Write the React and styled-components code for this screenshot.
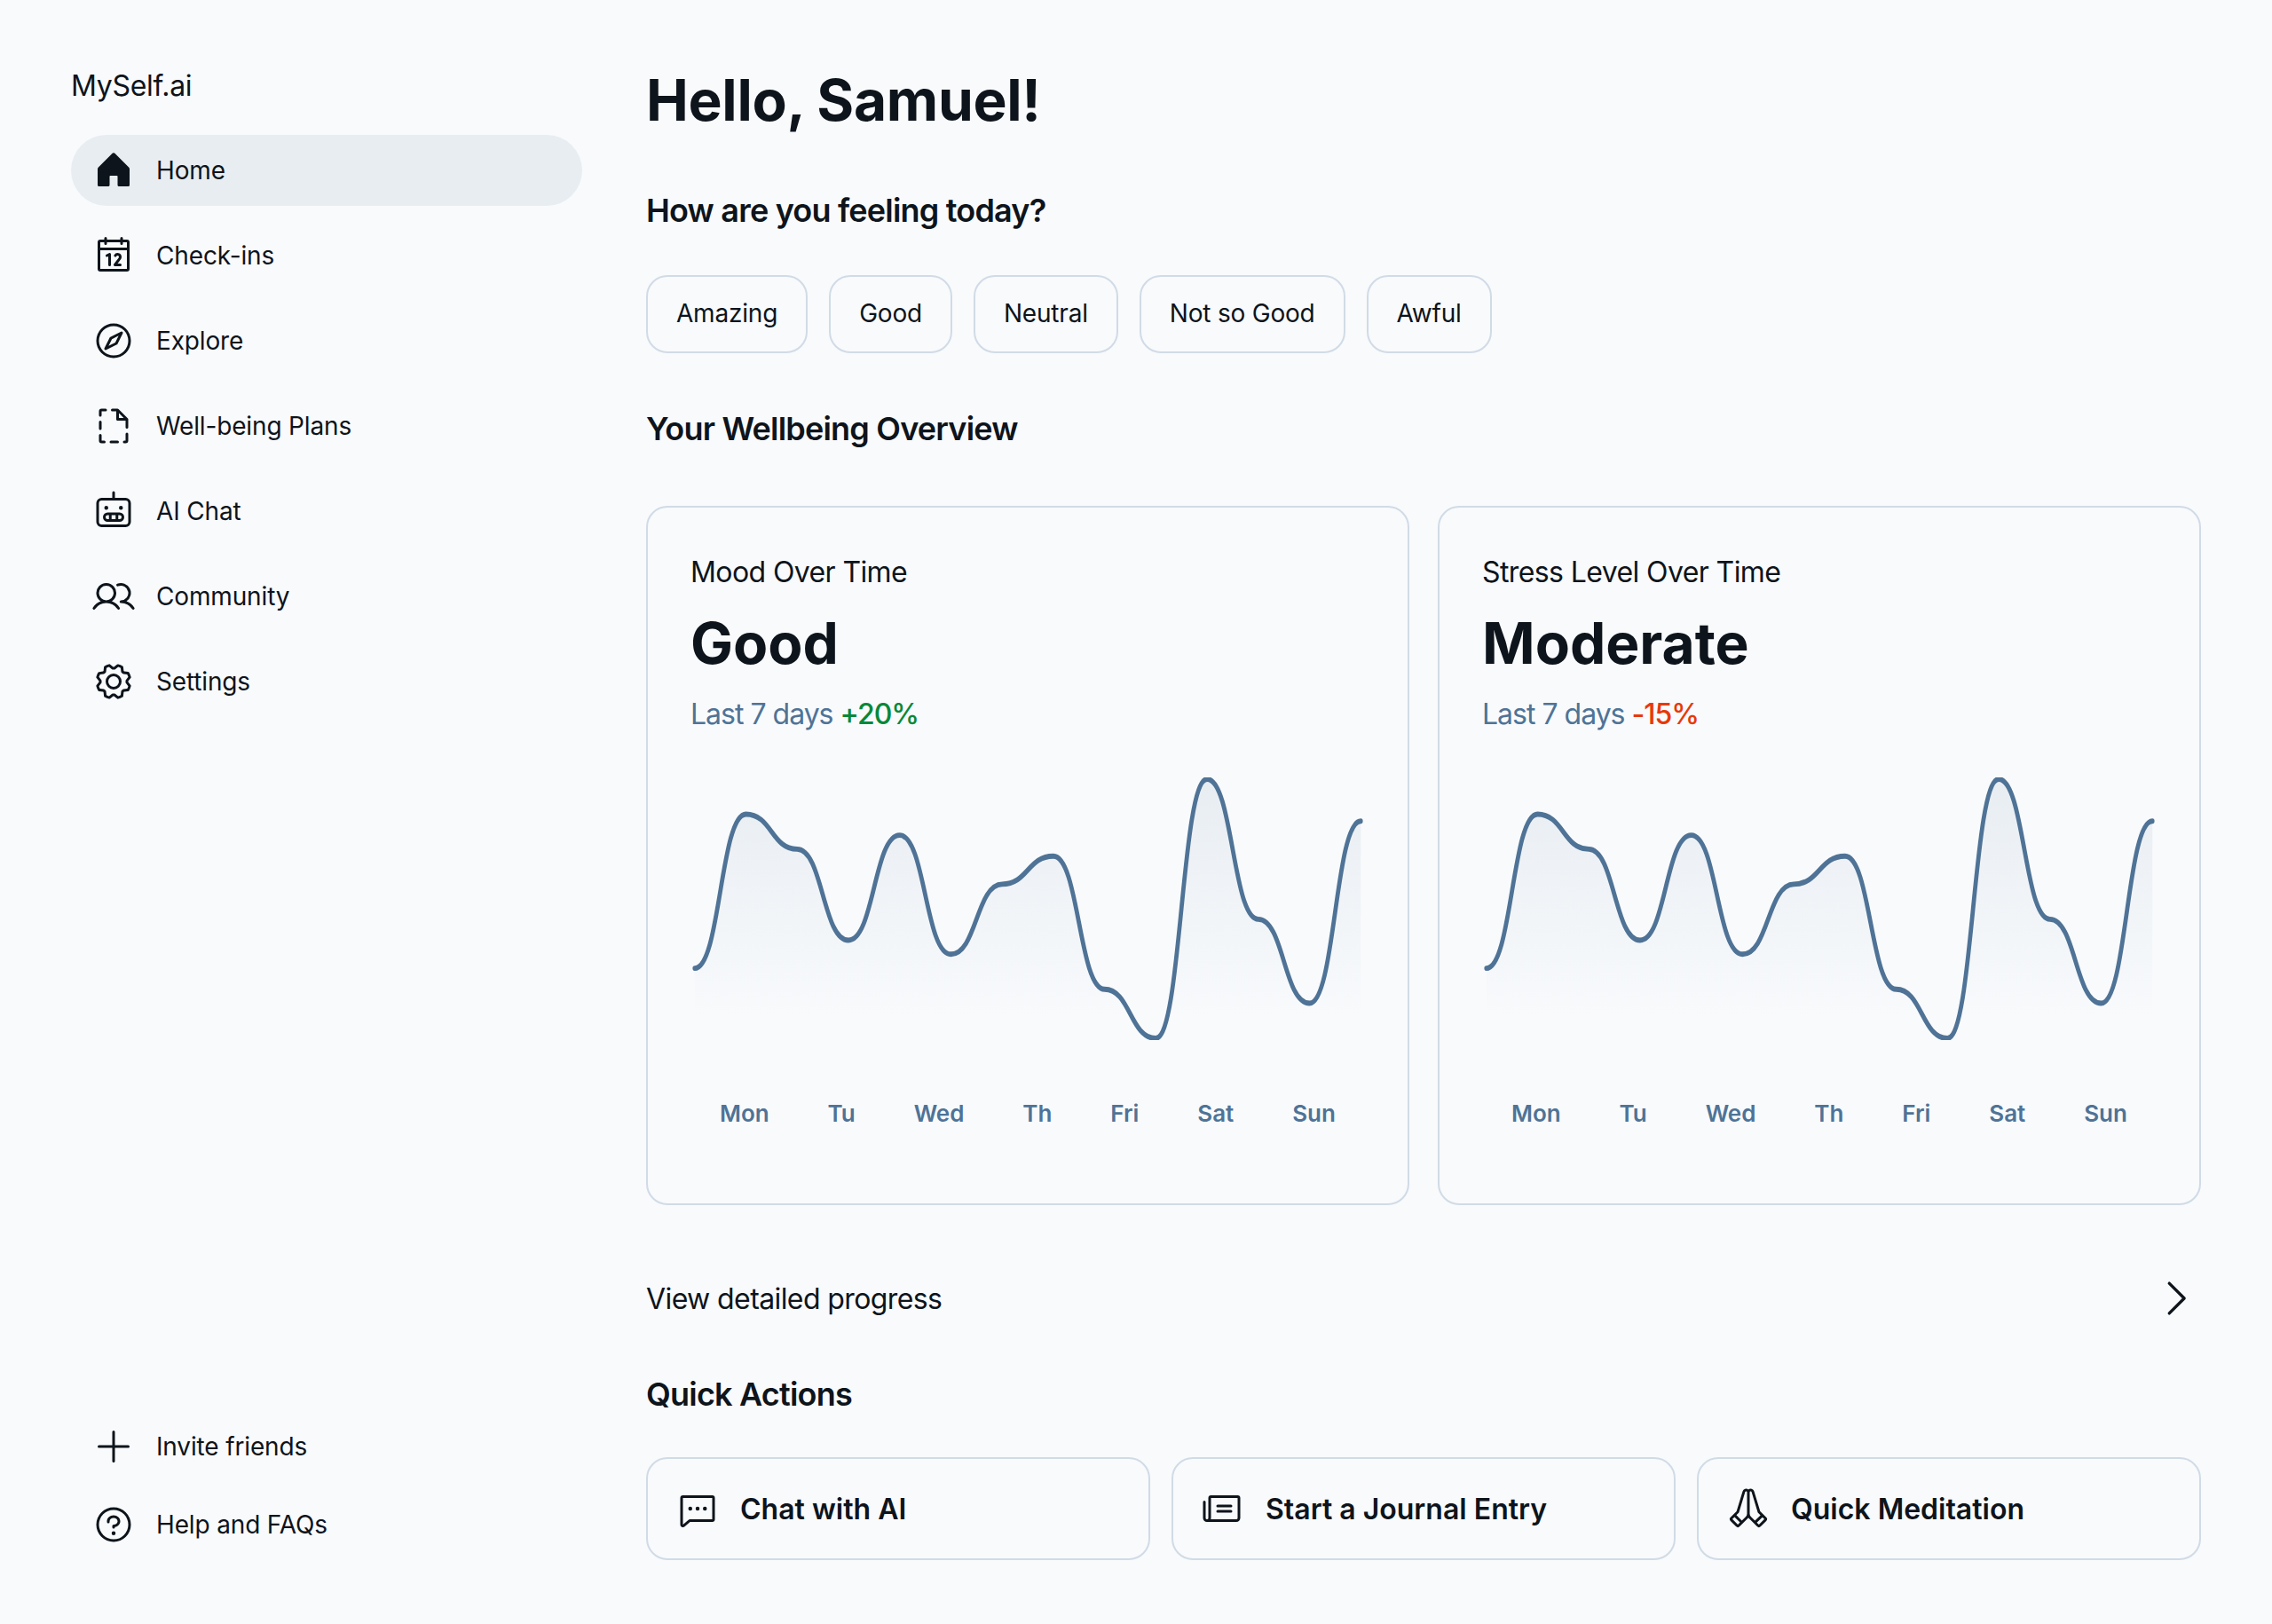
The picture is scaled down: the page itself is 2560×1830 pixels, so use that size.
import React from "react";
import styled, { createGlobalStyle } from "styled-components";
import {
  PiHouseFill,
  PiCalendar,
  PiCompass,
  PiFileDashed,
  PiRobot,
  PiUsers,
  PiGear,
  PiPlus,
  PiQuestion,
  PiChatDots,
  PiNewspaper,
  PiHandsPraying,
  PiCaretRight,
} from "react-icons/pi";

const GlobalStyle = createGlobalStyle`
  html, body {
    margin: 0;
    padding: 0;
    background: #f8fafc;
  }
  body {
    font-family: "Inter", "Noto Sans", sans-serif;
    color: #0e141b;
  }
  * {
    box-sizing: border-box;
  }
`;

const Page = styled.div`
  display: flex;
  gap: 72px;
  min-height: 1830px;
  padding: 0 80px;
  background: #f8fafc;
`;

const Sidebar = styled.aside`
  display: flex;
  flex-direction: column;
  justify-content: space-between;
  width: 576px;
  flex-shrink: 0;
  height: 1758px;
  padding-top: 72px;
`;

const Logo = styled.div`
  font-size: 32px;
  line-height: 50px;
  margin-bottom: 30px;
  letter-spacing: -0.3px;
`;

const NavList = styled.nav`
  display: flex;
  flex-direction: column;
  gap: ${(p) => p.$gap}px;
`;

const NavItem = styled.a`
  display: flex;
  align-items: center;
  gap: 24px;
  height: 80px;
  padding: 0 24px;
  border-radius: 40px;
  font-size: 28px;
  font-weight: 400;
  letter-spacing: -0.15px;
  background: ${(p) => (p.$active ? "#e8edf2" : "transparent")};

  svg {
    width: 48px;
    height: 48px;
    flex-shrink: 0;
  }
`;

const Main = styled.main`
  flex: 1;
  min-width: 0;
  padding-top: 68px;
`;

const Title = styled.h1`
  margin: 0;
  font-size: 64px;
  line-height: 90px;
  font-weight: 700;
  letter-spacing: -0.3px;
`;

const SectionTitle = styled.h2`
  margin: ${(p) => p.$top}px 0 0;
  font-size: 36px;
  line-height: 48px;
  font-weight: 600;
  letter-spacing: -0.8px;
`;

const Chips = styled.div`
  display: flex;
  gap: 24px;
  margin-top: 49px;
`;

const Chip = styled.button`
  height: 88px;
  padding: 0 32px 2px;
  border: 2px solid #d1dbe6;
  border-radius: 24px;
  background: transparent;
  color: #0e141b;
  font-family: inherit;
  font-size: 28px;
  font-weight: 400;
  letter-spacing: -0.2px;
`;

const Cards = styled.div`
  display: grid;
  grid-template-columns: 1fr 1fr;
  gap: 32px;
  margin-top: 63px;
`;

const Card = styled.section`
  height: 788px;
  padding: 51px 48px 0;
  border: 2px solid #d1dbe6;
  border-radius: 24px;
`;

const CardTitle = styled.div`
  font-size: 32px;
  line-height: 44px;
  letter-spacing: -0.6px;
`;

const CardValue = styled.div`
  margin-top: 18px;
  font-size: 64px;
  line-height: 80px;
  font-weight: 700;
`;

const CardMeta = styled.div`
  margin-top: 18px;
  font-size: 32px;
  line-height: 44px;
  letter-spacing: -1px;
  color: #4f7396;
`;

const Delta = styled.span`
  font-weight: 500;
  color: ${(p) => p.$color};
`;

const ChartSvg = styled.svg`
  display: block;
  width: 100%;
  height: 296px;
  margin-top: 49px;
`;

const Days = styled.div`
  display: flex;
  justify-content: space-around;
  margin-top: 65px;
  font-size: 26px;
  line-height: 36px;
  font-weight: 600;
  color: #4f7396;
`;

const ProgressRow = styled.a`
  display: flex;
  align-items: center;
  justify-content: space-between;
  height: 80px;
  margin-top: 65px;
  font-size: 32px;
  letter-spacing: -0.6px;

  svg {
    width: 54px;
    height: 54px;
    margin-right: 2px;
  }
`;

const Actions = styled.div`
  display: grid;
  grid-template-columns: repeat(3, 1fr);
  gap: 24px;
  margin-top: 47px;
`;

const Action = styled.button`
  display: flex;
  align-items: center;
  gap: 24px;
  height: 116px;
  padding: 0 32px;
  border: 2px solid #d1dbe6;
  border-radius: 24px;
  background: transparent;
  color: #0e141b;
  font-family: inherit;
  font-size: 32px;
  font-weight: 600;

  svg {
    width: 48px;
    height: 48px;
    flex-shrink: 0;
  }
`;

const LINE =
  "M0 109C18.1538 109 18.1538 21 36.3077 21C54.4615 21 54.4615 41 72.6154 41C90.7692 41 90.7692 93 108.923 93C127.077 93 127.077 33 145.231 33C163.385 33 163.385 101 181.538 101C199.692 101 199.692 61 217.846 61C236 61 236 45 254.154 45C272.308 45 272.308 121 290.462 121C308.615 121 308.615 149 326.769 149C344.923 149 344.923 1 363.077 1C381.231 1 381.231 81 399.385 81C417.538 81 417.538 129 435.692 129C453.846 129 453.846 25 472 25";

const days = ["Mon", "Tu", "Wed", "Th", "Fri", "Sat", "Sun"];

function Chart({ id }) {
  return (
    <ChartSvg viewBox="-3 0 478 150" preserveAspectRatio="none" fill="none">
      <path d={`${LINE}V149H0V109Z`} fill={`url(#${id})`} />
      <path d={LINE} stroke="#4f7396" strokeWidth="3" strokeLinecap="round" />
      <defs>
        <linearGradient id={id} x1="236" y1="1" x2="236" y2="136" gradientUnits="userSpaceOnUse">
          <stop stopColor="#e8edf2" />
          <stop offset="1" stopColor="#e8edf2" stopOpacity="0" />
        </linearGradient>
      </defs>
    </ChartSvg>
  );
}

function StatCard({ id, title, value, delta, color }) {
  return (
    <Card>
      <CardTitle>{title}</CardTitle>
      <CardValue>{value}</CardValue>
      <CardMeta>
        Last 7 days <Delta $color={color}>{delta}</Delta>
      </CardMeta>
      <Chart id={id} />
      <Days>
        {days.map((d) => (
          <span key={d}>{d}</span>
        ))}
      </Days>
    </Card>
  );
}

export default function App() {
  return (
    <Page>
      <GlobalStyle />
      <Sidebar>
        <div>
          <Logo>MySelf.ai</Logo>
          <NavList $gap={16}>
            <NavItem $active><PiHouseFill />Home</NavItem>
            <NavItem><PiCalendar />Check-ins</NavItem>
            <NavItem><PiCompass />Explore</NavItem>
            <NavItem><PiFileDashed />Well-being Plans</NavItem>
            <NavItem><PiRobot />AI Chat</NavItem>
            <NavItem><PiUsers />Community</NavItem>
            <NavItem><PiGear />Settings</NavItem>
          </NavList>
        </div>
        <NavList $gap={8}>
          <NavItem><PiPlus />Invite friends</NavItem>
          <NavItem><PiQuestion />Help and FAQs</NavItem>
        </NavList>
      </Sidebar>

      <Main>
        <Title>Hello, Samuel!</Title>
        <SectionTitle $top={55}>How are you feeling today?</SectionTitle>
        <Chips>
          {["Amazing", "Good", "Neutral", "Not so Good", "Awful"].map((c) => (
            <Chip key={c}>{c}</Chip>
          ))}
        </Chips>
        <SectionTitle $top={61}>Your Wellbeing Overview</SectionTitle>
        <Cards>
          <StatCard id="mood" title="Mood Over Time" value="Good" delta="+20%" color="#078838" />
          <StatCard id="stress" title="Stress Level Over Time" value="Moderate" delta="-15%" color="#e73908" />
        </Cards>
        <ProgressRow>
          View detailed progress
          <PiCaretRight />
        </ProgressRow>
        <SectionTitle $top={44}>Quick Actions</SectionTitle>
        <Actions>
          <Action><PiChatDots />Chat with AI</Action>
          <Action><PiNewspaper />Start a Journal Entry</Action>
          <Action><PiHandsPraying />Quick Meditation</Action>
        </Actions>
      </Main>
    </Page>
  );
}
